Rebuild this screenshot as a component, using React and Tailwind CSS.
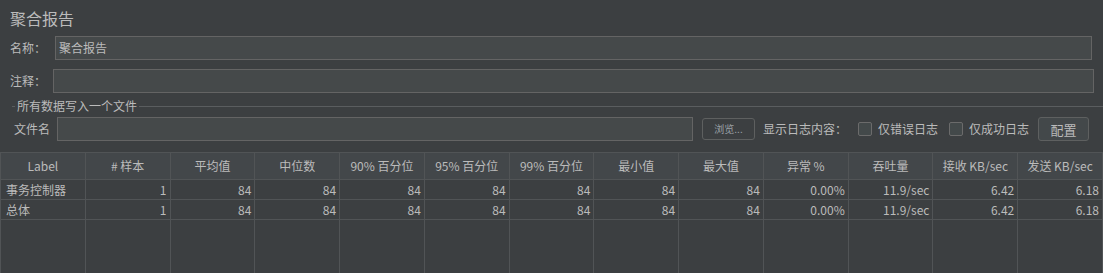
import React from "react";

const font = { fontFamily: '"Noto Sans CJK SC", "Noto Sans", sans-serif' };

const headers = [
  "Label",
  "# 样本",
  "平均值",
  "中位数",
  "90% 百分位",
  "95% 百分位",
  "99% 百分位",
  "最小值",
  "最大值",
  "异常 %",
  "吞吐量",
  "接收 KB/sec",
  "发送 KB/sec",
];

const rows = [
  ["事务控制器", "1", "84", "84", "84", "84", "84", "84", "84", "0.00%", "11.9/sec", "6.42", "6.18"],
  ["总体", "1", "84", "84", "84", "84", "84", "84", "84", "0.00%", "11.9/sec", "6.42", "6.18"],
];

function Checkbox({ label }) {
  return (
    <label className="flex items-center gap-[6px] shrink-0 whitespace-nowrap">
      <span className="w-[14px] h-[14px] border border-[#6b6b6b] bg-[#43494a] rounded-[2px]" />
      <span>{label}</span>
    </label>
  );
}

export default function App() {
  return (
    <div
      className="w-[1103px] h-[273px] bg-[#3c3f41] text-[#bbbbbb] text-[12px] overflow-hidden flex flex-col"
      style={font}
    >
      {/* Title */}
      <div className="pl-[10px] pt-[6px] h-[36px] text-[16px] leading-[24px]">聚合报告</div>

      {/* Name */}
      <div className="flex items-center h-[24px] pl-[10px] pr-[11px]">
        <span className="w-[45px] leading-none">名称：</span>
        <div className="flex-1 h-[24px] bg-[#45494a] border border-[#646464] pl-[3px] leading-[22px]">聚合报告</div>
      </div>

      {/* Comment */}
      <div className="flex items-center h-[24px] mt-[9px] pl-[10px] pr-[9px]">
        <span className="w-[43px] leading-none">注释：</span>
        <div className="flex-1 h-[24px] bg-[#45494a] border border-[#646464]" />
      </div>

      {/* Group */}
      <div className="flex items-center h-[18px] mt-[4px] pl-[12px]">
        <span className="w-[3px] h-px bg-[#5a5d5f]" />
        <span className="px-[2px] leading-none">所有数据写入一个文件</span>
        <span className="flex-1 h-px bg-[#5a5d5f]" />
      </div>

      {/* File row */}
      <div className="flex items-center h-[24px] mt-[2px] pl-[14px] whitespace-nowrap">
        <span className="w-[43px] shrink-0 leading-none">文件名</span>
        <div className="w-[636px] shrink-0 h-[24px] bg-[#45494a] border border-[#646464]" />
        <button className="ml-[9px] shrink-0 w-[53px] h-[22px] border border-[#5e6060] rounded-[3px] bg-[#3c3f41] text-[10px] text-[#9aa0a6] leading-none">
          浏览...
        </button>
        <span className="ml-[8px] shrink-0 leading-none">显示日志内容：</span>
        <div className="ml-[11px] shrink-0">
          <Checkbox label="仅错误日志" />
        </div>
        <div className="ml-[11px] shrink-0">
          <Checkbox label="仅成功日志" />
        </div>
        <button className="ml-[9px] shrink-0 w-[51px] h-[24px] border border-[#5e6060] rounded-[3px] bg-[#43484a] text-[13px] leading-none">
          配置
        </button>
      </div>

      {/* Table */}
      <div className="mt-[11px] flex-1 flex flex-col border-t border-l border-[#515456]">
        <div className="grid grid-cols-[repeat(13,minmax(0,1fr))] h-[27px] bg-[#43474a] border-b border-[#515456]">
          {headers.map((h) => (
            <div key={h} className="flex items-center justify-center border-r border-[#515456] text-[12px] leading-none">
              {h}
            </div>
          ))}
        </div>
        {rows.map((r, i) => (
          <div key={i} className="grid grid-cols-[repeat(13,minmax(0,1fr))] h-[20px] border-b border-[#515456]">
            {r.map((c, j) => (
              <div
                key={j}
                className={`flex items-center border-r border-[#515456] px-[3px] leading-none ${
                  j === 0 ? "justify-start pl-[5px]" : "justify-end"
                }`}
              >
                {c}
              </div>
            ))}
          </div>
        ))}
        <div className="flex-1 grid grid-cols-[repeat(13,minmax(0,1fr))]">
          {headers.map((h) => (
            <div key={h} className="border-r border-[#515456]" />
          ))}
        </div>
      </div>
    </div>
  );
}
